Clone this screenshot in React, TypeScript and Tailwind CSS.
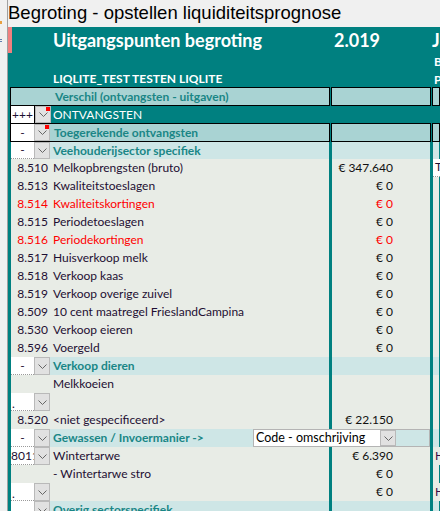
import type { ReactNode } from 'react';

const FONT = { fontFamily: 'Lato, "Open Sans", sans-serif' };

type DataRow = {
  code?: string;
  label: string;
  amount?: string;
  extra?: string;
  red?: boolean;
  extraBox?: boolean;
};

const melk: DataRow[] = [
  { code: '8.510', label: 'Melkopbrengsten (bruto)', amount: '€ 347.640', extra: 'T', extraBox: true },
  { code: '8.513', label: 'Kwaliteitstoeslagen', amount: '€ 0' },
  { code: '8.514', label: 'Kwaliteitskortingen', amount: '€ 0', red: true },
  { code: '8.515', label: 'Periodetoeslagen', amount: '€ 0' },
  { code: '8.516', label: 'Periodekortingen', amount: '€ 0', red: true },
  { code: '8.517', label: 'Huisverkoop melk', amount: '€ 0' },
  { code: '8.518', label: 'Verkoop kaas', amount: '€ 0' },
  { code: '8.519', label: 'Verkoop overige zuivel', amount: '€ 0' },
  { code: '8.509', label: '10 cent maatregel FrieslandCampina', amount: '€ 0' },
  { code: '8.530', label: 'Verkoop eieren', amount: '€ 0' },
  { code: '8.596', label: 'Voergeld', amount: '€ 0' },
];

function Chevron() {
  return (
    <svg width="9" height="5" viewBox="0 0 9 5" className="block">
      <polyline points="0.5,0.5 4.5,4.5 8.5,0.5" fill="none" stroke="#666" strokeWidth="1" />
    </svg>
  );
}

function DropButton({ red }: { red?: boolean }) {
  return (
    <div className="relative w-[16px] h-full shrink-0 bg-[#e1e1e1] border border-[#b9b9b9] flex items-center justify-center">
      <Chevron />
      {red && <div className="absolute top-0 right-0 w-[4px] h-[4px] bg-[#ff0000]" />}
    </div>
  );
}

// white input + dropdown button in the first 39px of a row
function SelectLead({ value, align = 'center' }: { value?: string; align?: 'center' | 'dot' | 'clip' }) {
  const pos =
    align === 'center'
      ? 'items-center justify-center'
      : align === 'dot'
        ? 'items-end leading-[12px] pl-[1px]'
        : 'items-center';
  return (
    <div className="flex h-full w-[39px] shrink-0">
      <div
        className={`w-[23px] h-full bg-white border-b border-dotted border-[#9a9a9a] flex overflow-hidden whitespace-nowrap text-[12px] text-[#1e0f33] ${pos}`}
      >
        {value}
      </div>
      <DropButton />
    </div>
  );
}

function Cells({
  c1,
  c2,
  c3,
  bg,
  bordered,
  h = 'h-[18px]',
}: {
  c1: ReactNode;
  c2?: ReactNode;
  c3?: ReactNode;
  bg: string;
  bordered?: boolean;
  h?: string;
}) {
  const b = bordered ? 'border border-black' : 'border-x border-transparent bg-clip-padding';
  return (
    <div className={`flex ${h} pl-[2px] shrink-0`}>
      <div className={`w-[320px] shrink-0 flex items-center ${b} ${bg}`}>{c1}</div>
      <div className={`w-[100px] shrink-0 ml-px flex items-center justify-end pr-[37px] ${b} ${bg}`}>{c2}</div>
      <div className={`flex-1 ml-px flex items-center ${b} ${bg}`}>{c3}</div>
    </div>
  );
}

function GroupLabel({ children }: { children: ReactNode }) {
  return <span className="pl-[3px] text-[12px] font-bold text-[#1a8686] whitespace-nowrap">{children}</span>;
}

function Amount({ children, red }: { children: ReactNode; red?: boolean }) {
  return <span className={`text-[12px] whitespace-nowrap ${red ? 'text-[#ff0000]' : 'text-[#111]'}`}>{children}</span>;
}

function Extra({ children }: { children: ReactNode }) {
  return <span className="pl-[2px] text-[12px] text-[#3a0a45]">{children}</span>;
}

function Data({ row }: { row: DataRow }) {
  const color = row.red ? 'text-[#ff0000]' : 'text-[#1e0f33]';
  return (
    <Cells
      bg="bg-[#e8ece6]"
      c1={
        <>
          <span className={`w-[39px] shrink-0 text-right pr-[2px] text-[12px] ${color}`}>{row.code}</span>
          <span className={`pl-[3px] text-[12px] whitespace-nowrap ${color}`}>{row.label}</span>
        </>
      }
      c2={row.amount && <Amount red={row.red}>{row.amount}</Amount>}
      c3={
        row.extra &&
        (row.extraBox ? (
          <div className="h-full w-full bg-white border-b border-dotted border-[#9a9a9a] pl-[2px] text-[12px] text-[#1e0f33] leading-[16px]">
            {row.extra}
          </div>
        ) : (
          <Extra>{row.extra}</Extra>
        ))
      }
    />
  );
}

function Group({ label, value = '-' }: { label: string; value?: string }) {
  return (
    <Cells
      bg="bg-[#cee6e6]"
      c1={
        <>
          <SelectLead value={value} />
          <GroupLabel>{label}</GroupLabel>
        </>
      }
    />
  );
}

export default function App() {
  return (
    <div className="w-[440px] h-[511px] overflow-hidden flex bg-[#f0f0f0]" style={FONT}>
      <div className="w-[7px] shrink-0 flex flex-col">
        <div className="h-[21px]" />
        <div className="h-[3px] w-[2px] bg-[#e8a040]" />
        <div className="h-[15px]" />
        <div className="h-[1px] w-[2px] bg-[#6080b0]" />
        <div className="h-[1px]" />
        <div className="h-[1px] w-[2px] bg-[#6080b0]" />
      </div>
      <div className="w-px shrink-0 bg-[#a0a0a0]" />
      <div className="flex-1 min-w-0 flex flex-col">
        <div
          className="h-[27px] shrink-0 flex items-start pt-[2px] text-[18.5px] text-black whitespace-nowrap leading-[22px]"
          style={{ fontFamily: '"Liberation Sans", Arial, sans-serif' }}
        >
          Begroting - opstellen liquiditeitsprognose
        </div>
        <div className="flex-1 bg-[#008080] flex flex-col">
          {/* header */}
          <div className="h-[60px] shrink-0 flex text-white font-bold">
            <div className="w-[4px] h-[26px] bg-[#f08080] shrink-0" />
            <div className="w-[322px] shrink-0 pl-[41px] flex flex-col">
              <div className="h-[26px] leading-[26px] text-[18px] whitespace-nowrap">Uitgangspunten begroting</div>
              <div className="mt-[19px] leading-[14px] text-[12px] whitespace-nowrap">LIQLITE_TEST TESTEN LIQLITE</div>
            </div>
            <div className="w-[98px] shrink-0 flex flex-col">
              <div className="h-[26px] leading-[26px] text-[18px]">2.019</div>
            </div>
            <div className="flex-1 flex flex-col">
              <div className="h-[26px] leading-[26px] text-[18px]">J</div>
              <div className="h-[18px] leading-[18px] text-[12px] pl-[2px]">B</div>
              <div className="h-[18px] leading-[18px] text-[12px] pl-[2px]">P</div>
            </div>
          </div>

          <Cells
            bordered
            h="h-[19px]"
            bg="bg-[#a9d3d3]"
            c1={
              <>
                <span className="w-[41px] shrink-0" />
                <GroupLabel>Verschil (ontvangsten - uitgaven)</GroupLabel>
              </>
            }
          />

          <div className="flex h-[17px] pl-[2px] shrink-0">
            <div className="w-[25px] h-full bg-white border-x border-black flex items-center justify-center text-[12px] text-[#1e0f33]">
              +++
            </div>
            <div className="w-[16px] h-full">
              <DropButton red />
            </div>
            <span className="pl-[2px] text-[12px] text-white self-center">ONTVANGSTEN</span>
          </div>

          <Cells
            bordered
            h="h-[19px]"
            bg="bg-[#a9d3d3]"
            c1={
              <>
                <div className="flex h-full w-[40px] shrink-0">
                  <div className="w-[23px] h-full bg-white flex items-center justify-center text-[12px] text-[#1e0f33]">-</div>
                  <DropButton red />
                </div>
                <GroupLabel>Toegerekende ontvangsten</GroupLabel>
              </>
            }
          />

          <Cells
            h="h-[17px]"
            bg="bg-[#cee6e6]"
            c1={
              <>
                <SelectLead value="-" />
                <GroupLabel>Veehouderijsector specifiek</GroupLabel>
              </>
            }
          />

          {melk.map((r) => (
            <Data key={r.code} row={r} />
          ))}

          <Group label="Verkoop dieren" />
          <Data row={{ label: 'Melkkoeien' }} />
          <Cells bg="bg-[#e8ece6]" c1={<SelectLead value="." align="dot" />} />
          <Data row={{ code: '8.520', label: '<niet gespecificeerd>', amount: '€ 22.150' }} />

          <div className="relative shrink-0">
            <Group label="Gewassen / Invoermanier ->" />
            <div className="absolute left-[245px] top-0 w-[177px] h-[18px] border border-[#b4b4b4] flex">
              <div className="w-[126px] h-full bg-white text-[12.5px] text-black leading-[16px] pl-[2px] whitespace-nowrap">
                Code - omschrijving
              </div>
              <DropButton />
            </div>
          </div>

          <Cells
            bg="bg-[#e8ece6]"
            c1={
              <>
                <SelectLead value="80113" align="clip" />
                <span className="pl-[3px] text-[12px] text-[#1e0f33] whitespace-nowrap">Wintertarwe</span>
              </>
            }
            c2={<Amount>€ 6.390</Amount>}
            c3={<Extra>H</Extra>}
          />
          <Data row={{ label: '- Wintertarwe stro', amount: '€ 0' }} />
          <Cells
            bg="bg-[#e8ece6]"
            c1={<SelectLead value="." align="dot" />}
            c2={<Amount>€ 0</Amount>}
            c3={<Extra>H</Extra>}
          />
          <Group label="Overig sectorspecifiek" value="" />
        </div>
      </div>
    </div>
  );
}
